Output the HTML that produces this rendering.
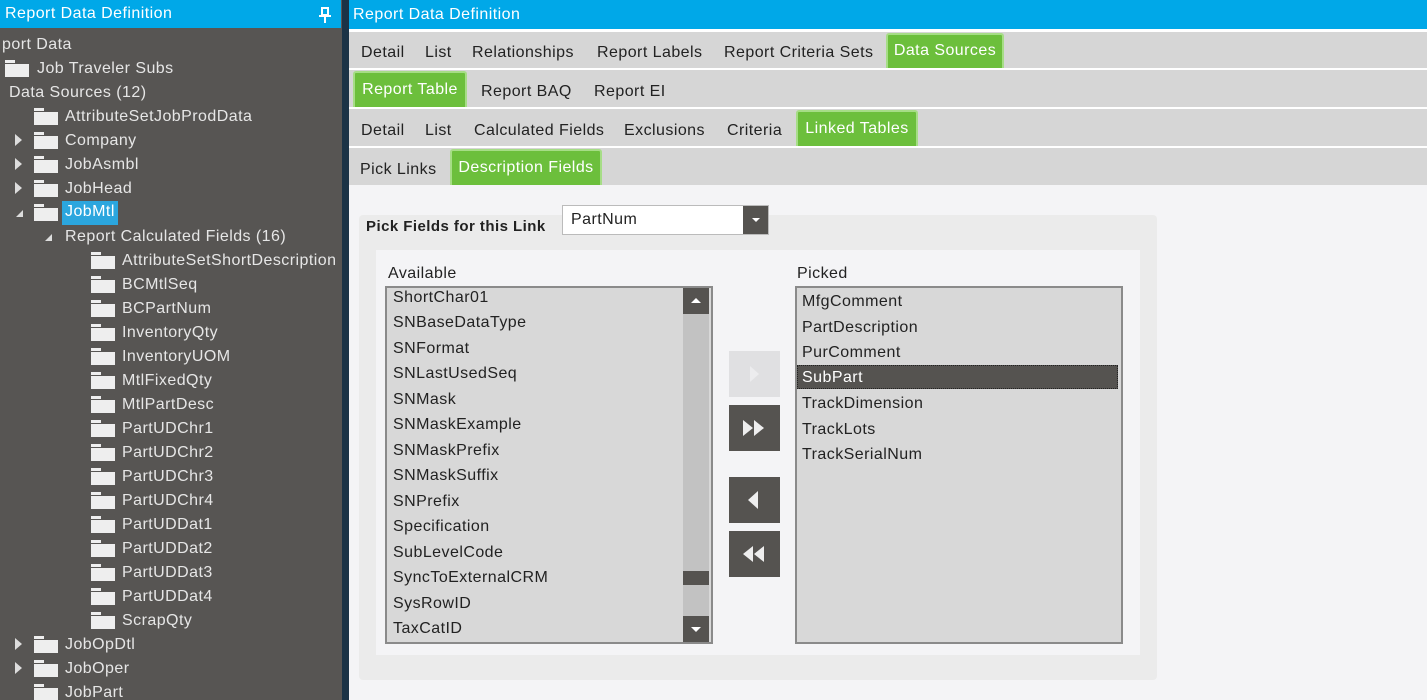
<!DOCTYPE html>
<html><head><style>
*{margin:0;padding:0;box-sizing:border-box}
body{width:1427px;height:700px;overflow:hidden;font-family:"Liberation Sans",sans-serif;font-size:16px;letter-spacing:0.45px;background:#f4f4f6;position:relative}
.a{position:absolute;white-space:nowrap}
.lp{position:absolute;left:0;top:0;width:342px;height:700px;background:#575553;color:#e6e6e6;overflow:hidden}
.fd{position:absolute;width:24px;height:17px}
.fd:before{content:"";position:absolute;left:0;top:0;width:10px;height:3px;background:#eee}
.fd:after{content:"";position:absolute;left:0;top:4px;width:24px;height:13px;background:#eee}
.tr{position:absolute;width:0;height:0;border-top:6px solid transparent;border-bottom:6px solid transparent;border-left:7px solid #ddd}
.tx{position:absolute;width:0;height:0;border-left:7px solid transparent;border-bottom:7px solid #ddd}
.row{position:absolute;left:349px;right:0;background:#d6d6d6;color:#222}
.g{position:absolute;background:#6cbf3c;color:#fff;border:2px solid #a6dd86;border-bottom:none;border-radius:3px 3px 0 0;text-align:center}
.li{position:absolute;left:393px;color:#222}
.btn{position:absolute;left:729px;width:51px;height:46px;background:#555350}
</style></head><body>
<div class="lp">
<div class="a" style="left:0;top:0;width:341px;height:28px;background:#00a8e8;color:#fff;padding:5px 0 0 5px;font-size:16px">Report Data Definition
<div class="a" style="left:321px;top:7px;width:8px;height:9px;border:2px solid #fff"></div>
<div class="a" style="left:319px;top:15px;width:12px;height:2px;background:#fff"></div>
<div class="a" style="left:324px;top:17px;width:2px;height:6px;background:#fff"></div></div>
<div class="a" style="left:2px;top:36px">port Data</div>
<div class="fd" style="left:5px;top:60px"></div><div class="a" style="left:37px;top:60px">Job Traveler Subs</div>
<div class="a" style="left:9px;top:84px">Data Sources (12)</div>
<div class="fd" style="left:34px;top:108px"></div><div class="a" style="left:65px;top:108px">AttributeSetJobProdData</div>
<div class="tr" style="left:15px;top:134px"></div><div class="fd" style="left:34px;top:132px"></div><div class="a" style="left:65px;top:132px">Company</div>
<div class="tr" style="left:15px;top:158px"></div><div class="fd" style="left:34px;top:156px"></div><div class="a" style="left:65px;top:156px">JobAsmbl</div>
<div class="tr" style="left:15px;top:182px"></div><div class="fd" style="left:34px;top:180px"></div><div class="a" style="left:65px;top:180px">JobHead</div>
<div class="tx" style="left:16px;top:210px"></div><div class="fd" style="left:34px;top:204px"></div><div class="a" style="left:62px;top:201px;background:#2ba6de;color:#fff;padding:2px 3px;height:24px">JobMtl</div>
<div class="tx" style="left:45px;top:234px"></div><div class="a" style="left:65px;top:228px">Report Calculated Fields (16)</div>
<div class="fd" style="left:91px;top:252px"></div><div class="a" style="left:122px;top:252px">AttributeSetShortDescription</div>
<div class="fd" style="left:91px;top:276px"></div><div class="a" style="left:122px;top:276px">BCMtlSeq</div>
<div class="fd" style="left:91px;top:300px"></div><div class="a" style="left:122px;top:300px">BCPartNum</div>
<div class="fd" style="left:91px;top:324px"></div><div class="a" style="left:122px;top:324px">InventoryQty</div>
<div class="fd" style="left:91px;top:348px"></div><div class="a" style="left:122px;top:348px">InventoryUOM</div>
<div class="fd" style="left:91px;top:372px"></div><div class="a" style="left:122px;top:372px">MtlFixedQty</div>
<div class="fd" style="left:91px;top:396px"></div><div class="a" style="left:122px;top:396px">MtlPartDesc</div>
<div class="fd" style="left:91px;top:420px"></div><div class="a" style="left:122px;top:420px">PartUDChr1</div>
<div class="fd" style="left:91px;top:444px"></div><div class="a" style="left:122px;top:444px">PartUDChr2</div>
<div class="fd" style="left:91px;top:468px"></div><div class="a" style="left:122px;top:468px">PartUDChr3</div>
<div class="fd" style="left:91px;top:492px"></div><div class="a" style="left:122px;top:492px">PartUDChr4</div>
<div class="fd" style="left:91px;top:516px"></div><div class="a" style="left:122px;top:516px">PartUDDat1</div>
<div class="fd" style="left:91px;top:540px"></div><div class="a" style="left:122px;top:540px">PartUDDat2</div>
<div class="fd" style="left:91px;top:564px"></div><div class="a" style="left:122px;top:564px">PartUDDat3</div>
<div class="fd" style="left:91px;top:588px"></div><div class="a" style="left:122px;top:588px">PartUDDat4</div>
<div class="fd" style="left:91px;top:612px"></div><div class="a" style="left:122px;top:612px">ScrapQty</div>
<div class="tr" style="left:15px;top:638px"></div><div class="fd" style="left:34px;top:636px"></div><div class="a" style="left:65px;top:636px">JobOpDtl</div>
<div class="tr" style="left:15px;top:662px"></div><div class="fd" style="left:34px;top:660px"></div><div class="a" style="left:65px;top:660px">JobOper</div>
<div class="fd" style="left:34px;top:684px"></div><div class="a" style="left:65px;top:684px">JobPart</div>
</div>
<div class="a" style="left:342px;top:0;width:7px;height:700px;background:#1b3346"></div>
<div class="a" style="left:349px;top:0;right:0;height:29px;background:#00a8e8;color:#fff;padding:6px 0 0 4px;font-size:16px">Report Data Definition</div>
<div class="a" style="left:349px;top:29px;right:0;height:156px;background:#fff"></div>
<div class="row" style="top:32px;height:36px"><span class="a" style="left:12px;top:12px">Detail</span><span class="a" style="left:76px;top:12px">List</span><span class="a" style="left:123px;top:12px">Relationships</span><span class="a" style="left:248px;top:12px">Report Labels</span><span class="a" style="left:375px;top:12px">Report Criteria Sets</span></div>
<div class="g" style="left:886px;top:33px;width:118px;height:35px;padding-top:7px">Data Sources</div>
<div class="row" style="top:70px;height:37px"><span class="a" style="left:132px;top:13px">Report BAQ</span><span class="a" style="left:245px;top:13px">Report EI</span></div>
<div class="g" style="left:353px;top:71px;width:114px;height:36px;padding-top:8px">Report Table</div>
<div class="row" style="top:109px;height:37px"><span class="a" style="left:12px;top:13px">Detail</span><span class="a" style="left:76px;top:13px">List</span><span class="a" style="left:125px;top:13px">Calculated Fields</span><span class="a" style="left:275px;top:13px">Exclusions</span><span class="a" style="left:378px;top:13px">Criteria</span></div>
<div class="g" style="left:796px;top:110px;width:122px;height:36px;padding-top:8px">Linked Tables</div>
<div class="row" style="top:148px;height:37px"><span class="a" style="left:11px;top:13px">Pick Links</span></div>
<div class="g" style="left:450px;top:149px;width:152px;height:36px;padding-top:8px">Description Fields</div>

<div class="a" style="left:359px;top:215px;width:798px;height:465px;background:#ebebeb;border-radius:4px"></div>
<div class="a" style="left:376px;top:250px;width:764px;height:405px;background:#f4f4f6"></div>
<div class="a" style="left:366px;top:218px;font-weight:bold;color:#222;font-size:15px">Pick Fields for this Link</div>
<div class="a" style="left:562px;top:205px;width:207px;height:30px;background:#fff;border:1px solid #bbb;padding:5px 0 0 8px;color:#222">PartNum<div class="a" style="right:0;top:0;width:25px;height:28px;background:#555350"><div class="a" style="left:9px;top:12px;border-left:4px solid transparent;border-right:4px solid transparent;border-top:4px solid #fff"></div></div></div>
<div class="a" style="left:388px;top:265px;font-size:16px;color:#222">Available</div>
<div class="a" style="left:797px;top:265px;font-size:16px;color:#222">Picked</div>
<div class="a" style="left:385px;top:286px;width:328px;height:358px;background:#d8d8d8;border:2px solid #8a8a8a"></div>
<div class="a" style="left:683px;top:288px;width:26px;height:354px;background:#c2c2c2"></div>
<div class="a" style="left:683px;top:288px;width:26px;height:26px;background:#555350"><div class="a" style="left:8px;top:10px;border-left:5px solid transparent;border-right:5px solid transparent;border-bottom:5px solid #fff"></div></div>
<div class="a" style="left:683px;top:571px;width:26px;height:14px;background:#555350"></div>
<div class="a" style="left:683px;top:616px;width:26px;height:26px;background:#555350"><div class="a" style="left:8px;top:11px;border-left:5px solid transparent;border-right:5px solid transparent;border-top:5px solid #fff"></div></div>
<div class="li" style="top:289px">ShortChar01</div>
<div class="li" style="top:314px">SNBaseDataType</div>
<div class="li" style="top:340px">SNFormat</div>
<div class="li" style="top:365px">SNLastUsedSeq</div>
<div class="li" style="top:391px">SNMask</div>
<div class="li" style="top:416px">SNMaskExample</div>
<div class="li" style="top:442px">SNMaskPrefix</div>
<div class="li" style="top:467px">SNMaskSuffix</div>
<div class="li" style="top:493px">SNPrefix</div>
<div class="li" style="top:518px">Specification</div>
<div class="li" style="top:544px">SubLevelCode</div>
<div class="li" style="top:569px">SyncToExternalCRM</div>
<div class="li" style="top:595px">SysRowID</div>
<div class="li" style="top:620px">TaxCatID</div>

<div class="btn" style="top:351px;background:#e0e0e2"><div class="a" style="left:21px;top:15px;border-top:8px solid transparent;border-bottom:8px solid transparent;border-left:9px solid #ececee"></div></div>
<div class="btn" style="top:405px"><div class="a" style="left:14px;top:15px;border-top:8px solid transparent;border-bottom:8px solid transparent;border-left:10px solid #eee"></div><div class="a" style="left:25px;top:15px;border-top:8px solid transparent;border-bottom:8px solid transparent;border-left:10px solid #eee"></div></div>
<div class="btn" style="top:477px"><div class="a" style="left:19px;top:14px;border-top:9px solid transparent;border-bottom:9px solid transparent;border-right:10px solid #eee"></div></div>
<div class="btn" style="top:531px"><div class="a" style="left:14px;top:15px;border-top:8px solid transparent;border-bottom:8px solid transparent;border-right:10px solid #eee"></div><div class="a" style="left:25px;top:15px;border-top:8px solid transparent;border-bottom:8px solid transparent;border-right:10px solid #eee"></div></div>

<div class="a" style="left:795px;top:286px;width:328px;height:358px;background:#d8d8d8;border:2px solid #8a8a8a"></div>
<div class="a" style="left:797px;top:365px;width:321px;height:24px;background:#555350;border:1px dotted #222"></div>
<div class="li" style="left:802px;top:293px">MfgComment</div>
<div class="li" style="left:802px;top:319px">PartDescription</div>
<div class="li" style="left:802px;top:344px">PurComment</div>
<div class="li" style="left:802px;top:369px;color:#fff">SubPart</div>
<div class="li" style="left:802px;top:395px">TrackDimension</div>
<div class="li" style="left:802px;top:421px">TrackLots</div>
<div class="li" style="left:802px;top:446px">TrackSerialNum</div>
</body></html>
